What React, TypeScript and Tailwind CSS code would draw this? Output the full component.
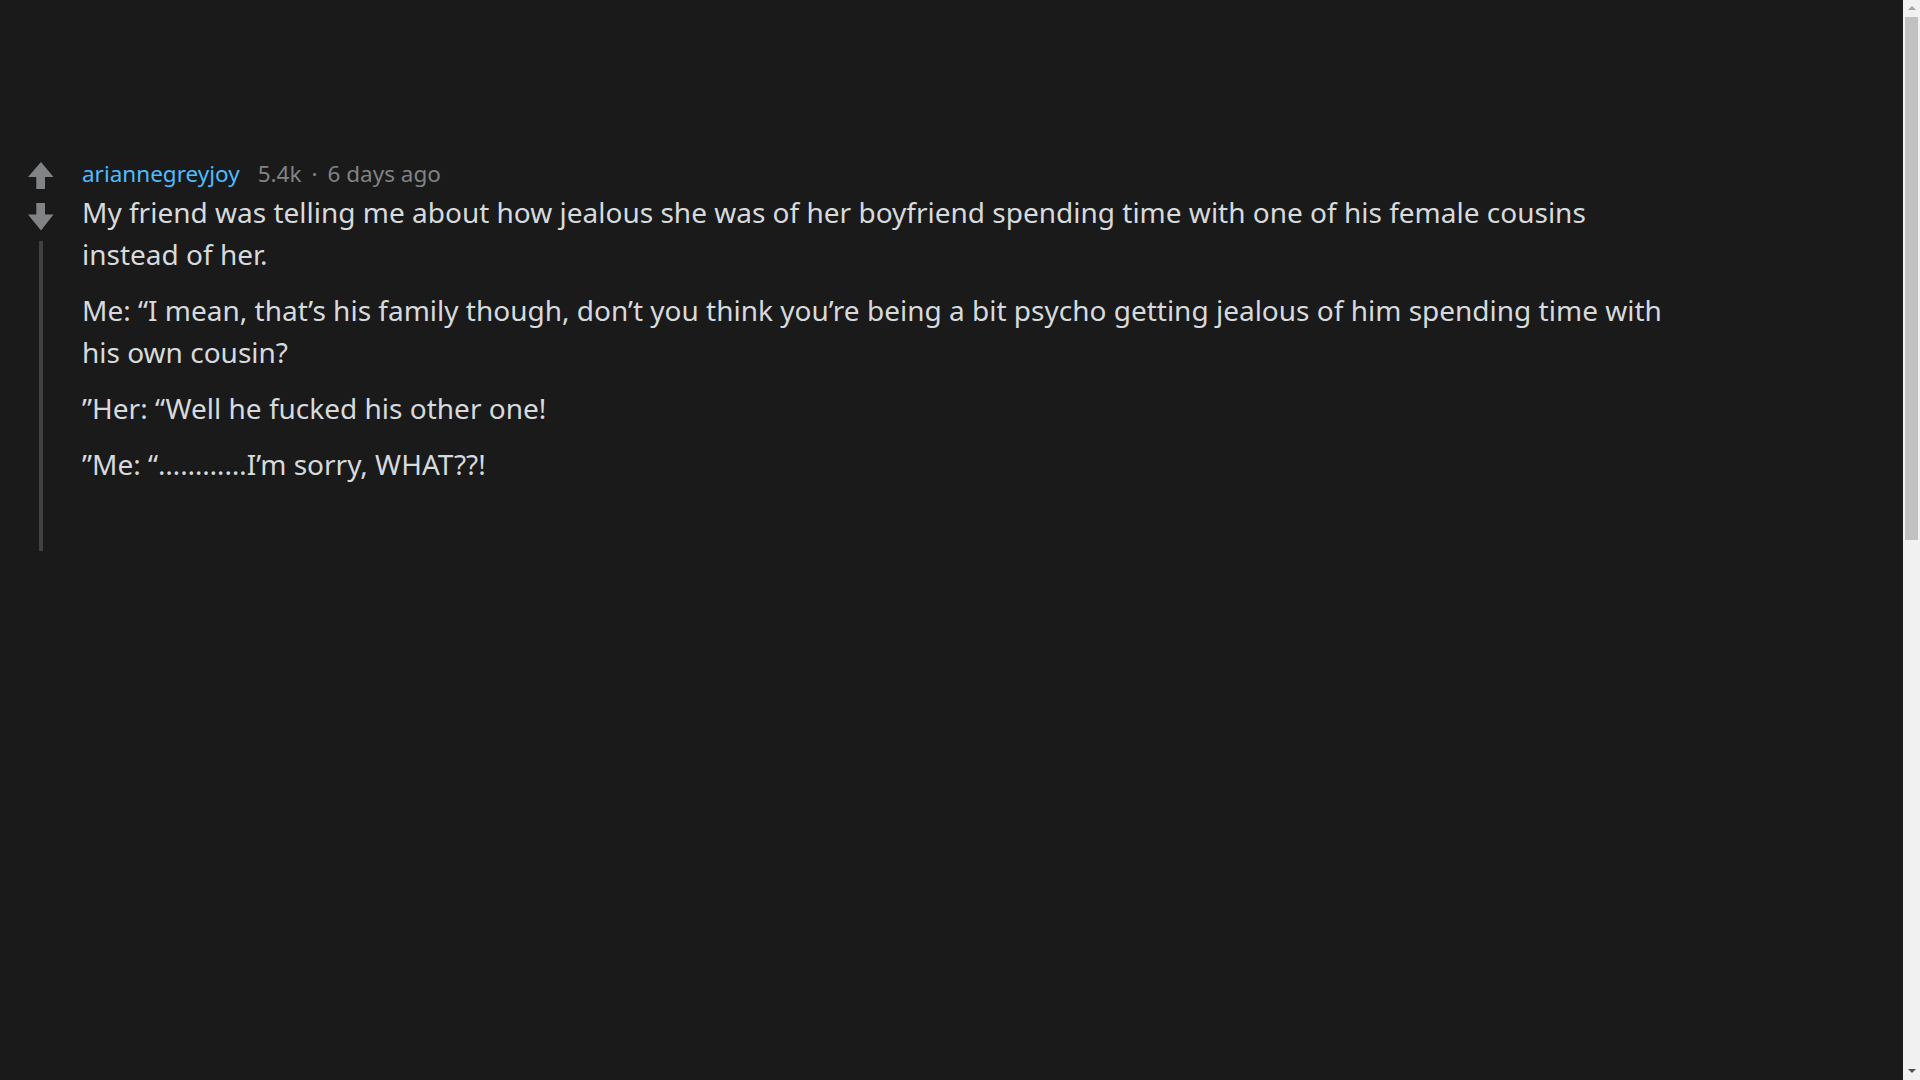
import React from "react";

function UpArrow() {
  return (
    <svg width="26" height="27" viewBox="0 0 26 27" className="block">
      <path d="M13 0 L25.5 15 L17 15 L17 27 L8.3 27 L8.3 15 L0 15 Z" fill="#818384" />
    </svg>
  );
}

function DownArrow() {
  return (
    <svg width="26" height="28" viewBox="0 0 26 28" className="block">
      <path d="M8.3 0 L17 0 L17 11.5 L25.5 11.5 L13 27.5 L0 11.5 L8.3 11.5 Z" fill="#818384" />
    </svg>
  );
}

export default function App() {
  const paras = [
    "My friend was telling me about how jealous she was of her boyfriend spending time with one of his female cousins instead of her.",
    "Me: \u201cI mean, that\u2019s his family though, don\u2019t you think you\u2019re being a bit psycho getting jealous of him spending time with his own cousin?",
    "\u201dHer: \u201cWell he fucked his other one!",
    "\u201dMe: \u201c\u2026\u2026\u2026\u2026I\u2019m sorry, WHAT??!",
  ];
  return (
    <div className="flex h-screen w-full overflow-hidden bg-[#1a1a1b]" style={{ fontFamily: '"Noto Sans", "Open Sans", sans-serif' }}>
      <main className="flex-1 pt-[161px]">
        <div className="flex">
          <div className="flex w-[82px] shrink-0 flex-col items-center">
            <div className="pt-[1px]">
              <UpArrow />
            </div>
            <div className="mt-[14px]">
              <DownArrow />
            </div>
            <div className="mt-[10px] h-[310px] w-[4px] bg-[#414142]" />
          </div>
          <div className="w-[1600px]">
            <div className="-mt-[1px] flex items-center text-[22.5px] leading-[28px]">
              <span className="text-[#4fbcff]">ariannegreyjoy</span>
              <span className="ml-[18px] text-[#818384]">5.4k</span>
              <span className="mx-[10px] text-[#818384]">·</span>
              <span className="text-[#818384]">6 days ago</span>
            </div>
            <div className="mt-[3px] text-[28px] leading-[42px] text-[#d7dadc]">
              {paras.map((p, i) => (
                <p key={i} className={i === 0 ? "" : "mt-[14px]"}>
                  {p}
                </p>
              ))}
            </div>
          </div>
        </div>
      </main>
      <aside className="flex w-[17px] shrink-0 flex-col bg-[#f1f1f1]">
        <div className="flex h-[17px] items-center justify-center">
          <svg width="8" height="5" viewBox="0 0 8 5">
            <path d="M4 0 L8 4 L0 4 Z" fill="#a3a3a3" />
          </svg>
        </div>
        <div className="mx-[2px] h-[523px] bg-[#c1c1c1]" />
        <div className="flex-1" />
        <div className="flex h-[17px] items-center justify-center">
          <svg width="8" height="5" viewBox="0 0 8 5">
            <path d="M0 0 L8 0 L4 4 Z" fill="#505050" />
          </svg>
        </div>
      </aside>
    </div>
  );
}
